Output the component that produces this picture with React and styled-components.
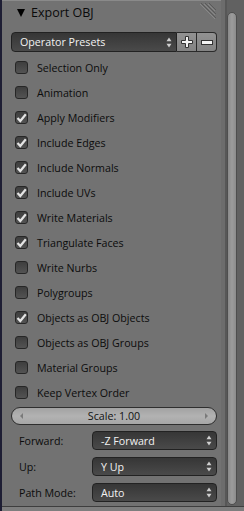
import styled, { createGlobalStyle } from "styled-components";

const Global = createGlobalStyle`
  html, body { margin: 0; padding: 0; background: #727272; }
  body { font-family: "Open Sans", "DejaVu Sans", sans-serif; }
`;

const Page = styled.div`
  display: flex;
  width: 244px;
  height: 511px;
  overflow: hidden;
  background: #727272;
`;

const LeftEdge = styled.div`
  width: 2px;
  background: #1e1e34;
`;

const Main = styled.div`
  display: flex;
  flex-direction: column;
  flex: 1;
`;

const Body = styled.div`
  display: flex;
  flex: 1;
`;

const Panel = styled.div`
  width: 219px;
  display: flex;
  flex-direction: column;
  border-top: 1px solid #8a8a8a;
  padding: 0 4px 0 9px;
  box-sizing: border-box;
`;

const Gutter = styled.div`
  width: 4px;
  background: #6c6c6c;
`;

const ScrollTrack = styled.div`
  width: 19px;
  display: flex;
  background: #616161;
  border-left: 2px solid #575757;
  box-sizing: border-box;
  padding: 12px 7px 1px 0;
`;

const Thumb = styled.div`
  flex: 1;
  border-radius: 5px;
  border: 1px solid #4e4e4e;
  background: linear-gradient(to right, #8a8a8a, #9c9c9c 50%, #8c8c8c);
`;

const Footer = styled.div`
  height: 4px;
  border-top: 1px solid #3e3e3e;
  background: #7e7e7e;
`;

const Header = styled.div`
  height: 23px;
  display: flex;
  align-items: center;
  position: relative;
  font-size: 12.5px;
  color: #0a0a0a;
`;

const Triangle = styled.span`
  width: 0;
  height: 0;
  margin: 0 6px 0 6px;
  border-left: 4px solid transparent;
  border-right: 4px solid transparent;
  border-top: 8px solid #000;
`;

const Hatch = styled.svg`
  position: absolute;
  right: 1px;
  top: 2px;
`;

const PresetRow = styled.div`
  display: flex;
  height: 20px;
  margin-top: 8px;
`;

const Dropdown = styled.div`
  flex: 1;
  display: flex;
  align-items: center;
  justify-content: space-between;
  padding: 0 4px 0 8px;
  border: 1px solid #222;
  border-radius: ${({ $joined }) => ($joined ? "4px 0 0 4px" : "4px")};
  background: linear-gradient(to bottom, #363636, #4a4a4a);
  color: #f2f2f2;
  font-size: 10.7px;
  box-sizing: border-box;
`;

const IconButton = styled.div`
  width: 20px;
  display: flex;
  align-items: center;
  justify-content: center;
  border: 1px solid #2a2a2a;
  border-left: none;
  border-radius: ${({ $last }) => ($last ? "0 4px 4px 0" : "0")};
  background: linear-gradient(to bottom, #929292, #838383);
  box-sizing: border-box;
`;

const List = styled.div`
  display: flex;
  flex-direction: column;
  margin-top: 3px;
`;

const CheckRow = styled.div`
  height: 25px;
  display: flex;
  align-items: center;
  gap: 9px;
  padding-left: 4px;
  font-size: 10.7px;
  color: #0c0c0c;
`;

const Box = styled.div`
  width: 13px;
  height: 13px;
  border-radius: 3px;
  border: 1px solid #262626;
  background: linear-gradient(to bottom, #3e3e3e, #535353);
  box-sizing: border-box;
  display: flex;
  align-items: center;
  justify-content: center;
`;

const Slider = styled.div`
  height: 18px;
  margin-top: 2px;
  border: 1px solid #2e2e2e;
  border-radius: 9px;
  background: linear-gradient(to bottom, #a2a2a2, #b2b2b2 50%, #a6a6a6);
  display: flex;
  align-items: center;
  justify-content: space-between;
  padding: 0 8px;
  box-sizing: border-box;
  font-size: 10.7px;
  color: #111;
`;

const SideArrow = styled.span`
  width: 0;
  height: 0;
  border-top: 3px solid transparent;
  border-bottom: 3px solid transparent;
  ${({ $right }) =>
    $right ? "border-left: 3px solid #7a7a7a;" : "border-right: 3px solid #7a7a7a;"}
`;

const Props = styled.div`
  display: flex;
  flex-direction: column;
  gap: 7px;
  margin-top: 6px;
`;

const PropRow = styled.div`
  display: flex;
  height: 19px;
  align-items: stretch;
`;

const PropLabel = styled.div`
  width: 73px;
  padding-left: 8px;
  display: flex;
  align-items: center;
  font-size: 10.7px;
  color: #0c0c0c;
`;

const Updown = () => (
  <svg width="6" height="11" viewBox="0 0 6 11">
    <path d="M3 0.5 L5.5 4.2 H0.5 Z" fill="#cfcfcf" />
    <path d="M3 10.5 L5.5 6.8 H0.5 Z" fill="#cfcfcf" />
  </svg>
);

const Check = () => (
  <svg width="11" height="10" viewBox="0 0 11 10">
    <path d="M1.5 5 L4.3 8 L9.8 1.2" fill="none" stroke="#e4e4e4" strokeWidth="2.2" />
  </svg>
);

const options = [
  ["Selection Only", false],
  ["Animation", false],
  ["Apply Modifiers", true],
  ["Include Edges", true],
  ["Include Normals", true],
  ["Include UVs", true],
  ["Write Materials", true],
  ["Triangulate Faces", true],
  ["Write Nurbs", false],
  ["Polygroups", false],
  ["Objects as OBJ Objects", true],
  ["Objects as OBJ Groups", false],
  ["Material Groups", false],
  ["Keep Vertex Order", false],
];

const props = [
  ["Forward:", "-Z Forward"],
  ["Up:", "Y Up"],
  ["Path Mode:", "Auto"],
];

export default function App() {
  return (
    <Page>
      <Global />
      <LeftEdge />
      <Main>
        <Body>
          <Panel>
            <Header>
              <Triangle />
              Export OBJ
              <Hatch width="16" height="16" viewBox="0 0 16 16">
                {[0, 4, 8].map((o) => (
                  <g key={o}>
                    <line x1={1 + o} y1={0} x2={16} y2={15 - o} stroke="#5a5a5a" strokeWidth="1" />
                    <line x1={0 + o} y1={1} x2={15} y2={16 - o} stroke="#888" strokeWidth="1" />
                  </g>
                ))}
              </Hatch>
            </Header>
            <PresetRow>
              <Dropdown $joined>
                Operator Presets
                <Updown />
              </Dropdown>
              <IconButton>
                <svg width="12" height="12" viewBox="0 0 12 12">
                  <path d="M4.5 0.5 H7.5 V4.5 H11.5 V7.5 H7.5 V11.5 H4.5 V7.5 H0.5 V4.5 H4.5 Z" fill="#f4f4f4" stroke="#333" strokeWidth="1" />
                </svg>
              </IconButton>
              <IconButton $last>
                <svg width="12" height="5" viewBox="0 0 12 5">
                  <rect x="0.5" y="0.5" width="11" height="4" fill="#f4f4f4" stroke="#333" strokeWidth="1" />
                </svg>
              </IconButton>
            </PresetRow>
            <List>
              {options.map(([label, on]) => (
                <CheckRow key={label}>
                  <Box>{on && <Check />}</Box>
                  {label}
                </CheckRow>
              ))}
            </List>
            <Slider>
              <SideArrow />
              Scale: 1.00
              <SideArrow $right />
            </Slider>
            <Props>
              {props.map(([label, value]) => (
                <PropRow key={label}>
                  <PropLabel>{label}</PropLabel>
                  <Dropdown>
                    {value}
                    <Updown />
                  </Dropdown>
                </PropRow>
              ))}
            </Props>
          </Panel>
          <Gutter />
          <ScrollTrack>
            <Thumb />
          </ScrollTrack>
        </Body>
        <Footer />
      </Main>
    </Page>
  );
}
